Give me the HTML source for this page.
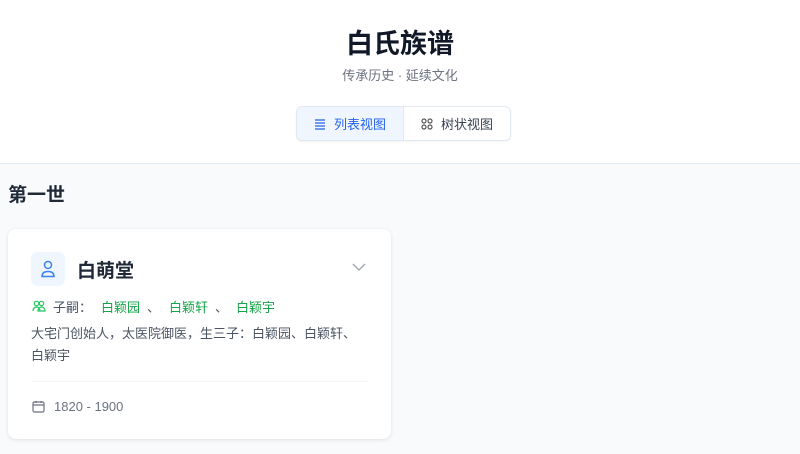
<!DOCTYPE html>
<html><head><meta charset="utf-8"><style>
*{margin:0;padding:0;box-sizing:border-box}
body{width:800px;height:454px;overflow:hidden;background:#f8fafc;font-family:"Liberation Sans","Noto Sans CJK SC",sans-serif;position:relative}
.hdr{position:absolute;left:0;top:0;width:800px;height:164px;background:#fff;border-bottom:1px solid #e2e8f0}
.t{position:absolute;left:0;width:800px;text-align:center}
.tabs{position:absolute;left:296px;top:106px;width:215px;height:35px;border:1px solid #e2e8f0;border-radius:6px;display:flex;overflow:hidden;box-shadow:0 1px 2px rgba(0,0,0,.05)}
.tab{height:100%;display:flex;align-items:center;justify-content:center;font-size:13px;gap:8px}
.card{position:absolute;left:8px;top:229px;width:383px;height:210px;background:#fff;border-radius:8px;box-shadow:0 1px 4px rgba(0,0,0,.1)}
.g{color:#16a34a;position:absolute;top:0}
</style></head><body>
<div class="hdr">
<div class="t" style="top:22px;font-size:27px;font-weight:bold;color:#111827">白氏族谱</div>
<div class="t" style="top:65px;font-size:13px;color:#6b7280">传承历史 · 延续文化</div>
<div class="tabs">
<div class="tab" style="width:107px;background:#eff6ff;color:#2563eb;border-right:1px solid #e2e8f0"><svg width="12" height="12" viewBox="0 0 12 12" stroke="#2563eb" stroke-width="1.3"><path d="M1 2h10M1 5h10M1 8h10M1 11h10"/></svg>列表视图</div>
<div class="tab" style="width:106px;color:#374151"><svg width="12" height="12" viewBox="0 0 12 12" fill="none" stroke="#555" stroke-width="1.2"><circle cx="3" cy="3" r="2"/><circle cx="9" cy="3" r="2"/><circle cx="3" cy="9" r="2"/><circle cx="9" cy="9" r="2"/></svg>树状视图</div>
</div>
</div>
<div style="position:absolute;left:8px;top:180px;font-size:19px;font-weight:bold;color:#1f2937">第一世</div>
<div class="card">
<div style="position:absolute;left:23px;top:23px;width:34px;height:34px;border-radius:7px;background:#eff6ff;display:flex;align-items:center;justify-content:center"><svg width="16" height="18" viewBox="0 0 16 18" fill="none" stroke="#3b82f6" stroke-width="1.5"><circle cx="8" cy="5" r="3.5"/><path d="M2 16.5c0-3.5 2.5-5 6-5s6 1.5 6 5z"/></svg></div>
<div style="position:absolute;left:69px;top:27px;font-size:19px;font-weight:bold;color:#1f2937">白萌堂</div>
<svg style="position:absolute;left:344px;top:34px" width="14" height="9" viewBox="0 0 14 9" fill="none" stroke="#9ca3af" stroke-width="1.3"><path d="M1 1l6 6 6-6"/></svg>
<div style="position:absolute;left:23px;top:68px;width:340px;height:20px;font-size:13px;color:#4b5563">
<svg style="position:absolute;left:1px;top:3px" width="14" height="12" viewBox="0 0 14 12" fill="none" stroke="#22c55e" stroke-width="1.2"><circle cx="4.5" cy="3.5" r="2.2"/><circle cx="9.5" cy="3.5" r="2.2"/><path d="M1 11c0-2.5 1.5-4 3.5-4s3.5 1.5 3.5 4M6 11c0-2.5 1.5-4 3.5-4S13 8.5 13 11z"/></svg>
<span style="position:absolute;left:22px;top:0">子嗣：</span>
<span class="g" style="left:70px">白颖园</span><span style="position:absolute;left:116px">、</span>
<span class="g" style="left:138px">白颖轩</span><span style="position:absolute;left:184px">、</span>
<span class="g" style="left:205px">白颖宇</span></div>
<div style="position:absolute;left:23px;top:94px;width:345px;font-size:13px;line-height:22px;color:#4b5563">大宅门创始人，太医院御医，生三子：白颖园、白颖轩、<br>白颖宇</div>
<div style="position:absolute;left:23px;top:152px;width:337px;border-top:1px solid #f1f5f9"></div>
<svg style="position:absolute;left:24px;top:171px" width="13" height="13" viewBox="0 0 13 13" fill="none" stroke="#6b7280" stroke-width="1.2"><rect x="1" y="2" width="11" height="10" rx="1.5"/><path d="M1 5h11M4 1v2M9 1v2"/></svg>
<div style="position:absolute;left:46px;top:170px;font-size:13px;color:#6b7280">1820 - 1900</div>
</div>
</body></html>
